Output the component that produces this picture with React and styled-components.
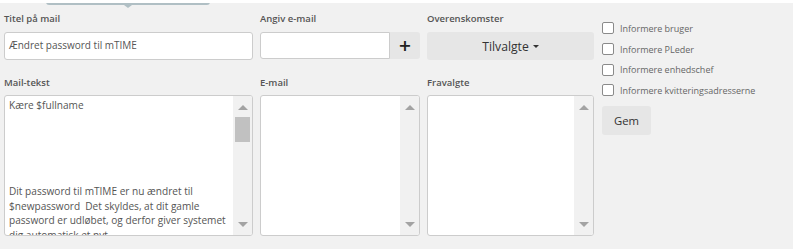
import React from "react";
import styled, { createGlobalStyle } from "styled-components";

const Global = createGlobalStyle`
  html, body { margin: 0; padding: 0; background: #f1f1f1; }
  body { font-family: "Open Sans", "Liberation Sans", sans-serif; }
  * { box-sizing: border-box; }
`;

const Page = styled.div`
  position: relative;
  width: 793px;
  height: 249px;
  background: #f1f1f1;
  border-top: 3px solid #ffffff;
  overflow: hidden;
`;

const Pointer = styled.div`
  position: absolute;
  top: -3px;
  left: 46px;
  width: 164px;
  height: 5px;
  background: #b0bfc4;
  border-radius: 0 0 3px 3px;
  &::after {
    content: "";
    position: absolute;
    left: 78px;
    top: 5px;
    border-left: 4px solid transparent;
    border-right: 4px solid transparent;
    border-top: 3px solid #b0bfc4;
  }
`;

const Layout = styled.div`
  display: flex;
  padding: 8px 0 0 4px;
  gap: 6px;
`;

const FormGrid = styled.div`
  display: grid;
  grid-template-columns: 249px 160px 167px;
  column-gap: 7px;
  align-content: start;
`;

const Field = styled.div`
  display: flex;
  flex-direction: column;
  margin-bottom: ${(p) => p.$mb || 0}px;
`;

const Label = styled.div`
  font-size: 9.5px;
  font-weight: 600;
  color: #555;
  line-height: 15px;
  height: 15px;
  margin-bottom: ${(p) => p.$mb ?? 6}px;
  white-space: nowrap;
`;

const TextInput = styled.div`
  height: 27px;
  background: #fff;
  border: 1px solid #ccc;
  border-radius: ${(p) => (p.$group ? "3px 0 0 3px" : "3px")};
  font-size: 10px;
  color: #555;
  line-height: 25px;
  padding: 0 4px;
  flex: 1;
  white-space: nowrap;
  overflow: hidden;
`;

const Group = styled.div`
  display: flex;
  height: 27px;
`;

const AddonButton = styled.div`
  width: 30px;
  background: #e6e6e6;
  border-radius: 0 3px 3px 0;
  display: flex;
  align-items: center;
  justify-content: center;
  font-size: 16px;
  font-weight: 700;
  color: #222;
  font-family: "DejaVu Sans", sans-serif;
`;

const GrayButton = styled.div`
  height: ${(p) => p.$h || 28}px;
  width: ${(p) => (p.$w ? p.$w + "px" : "auto")};
  background: #e6e6e6;
  border-radius: 3px;
  display: flex;
  align-items: center;
  justify-content: center;
  gap: 4px;
  font-size: ${(p) => p.$fs || 12.2}px;
  color: #333;
`;

const Caret = styled.span`
  display: inline-block;
  border-left: 3px solid transparent;
  border-right: 3px solid transparent;
  border-top: 3px solid #333;
  margin-top: 1px;
`;

const Box = styled.div`
  position: relative;
  height: 141px;
  background: #fff;
  border: 1px solid #ccc;
  border-radius: 3px;
  display: flex;
  overflow: hidden;
`;

const BoxText = styled.div`
  flex: 1;
  padding: 2px 1px 2px 4px;
  font-size: 10.1px;
  line-height: 14.4px;
  color: #555;
  overflow: hidden;
  white-space: pre-wrap;
`;

const Scrollbar = styled.div`
  position: relative;
  width: 19px;
  flex: none;
  background: #f1f1f1;
`;

const Arrow = styled.div`
  position: absolute;
  left: 5px;
  ${(p) => (p.$down ? "bottom: 8px;" : "top: 9px;")}
  border-left: 5px solid transparent;
  border-right: 5px solid transparent;
  ${(p) => (p.$down ? "border-top: 5px solid #a3a3a3;" : "border-bottom: 5px solid #a3a3a3;")}
`;

const Thumb = styled.div`
  position: absolute;
  left: 2px;
  right: 2px;
  top: 21px;
  height: 25px;
  background: #c1c1c1;
`;

const Side = styled.div`
  display: flex;
  flex-direction: column;
  padding-top: 7px;
  padding-left: 2px;
`;

const CheckRow = styled.label`
  display: flex;
  align-items: center;
  gap: 6px;
  height: 20.7px;
  font-size: 9px;
  color: #666;
  white-space: nowrap;
`;

const Check = styled.span`
  width: 12px;
  height: 12px;
  border: 1px solid #8a8a8a;
  border-radius: 2px;
  background: #fff;
  flex: none;
`;

const GemWrap = styled.div`
  margin-top: 5px;
`;

const mailText = `Kære $fullname





Dit password til mTIME er nu ændret til $newpassword  Det skyldes, at dit gamle password er udløbet, og derfor giver systemet dig automatisk et nyt.`;

function Scroll({ thumb }) {
  return (
    <Scrollbar>
      <Arrow />
      {thumb && <Thumb />}
      <Arrow $down />
    </Scrollbar>
  );
}

export default function App() {
  return (
    <>
      <Global />
      <Page>
        <Pointer />
        <Layout>
          <FormGrid>
            <Field $mb={15}>
              <Label>Titel på mail</Label>
              <TextInput>Ændret password til mTIME</TextInput>
            </Field>
            <Field $mb={15}>
              <Label>Angiv e-mail</Label>
              <Group>
                <TextInput $group />
                <AddonButton>+</AddonButton>
              </Group>
            </Field>
            <Field $mb={15}>
              <Label>Overenskomster</Label>
              <GrayButton>
                Tilvalgte <Caret />
              </GrayButton>
            </Field>
            <Field>
              <Label $mb={5}>Mail-tekst</Label>
              <Box>
                <BoxText>{mailText}</BoxText>
                <Scroll thumb />
              </Box>
            </Field>
            <Field>
              <Label $mb={5}>E-mail</Label>
              <Box>
                <BoxText />
                <Scroll />
              </Box>
            </Field>
            <Field>
              <Label $mb={5}>Fravalgte</Label>
              <Box>
                <BoxText />
                <Scroll />
              </Box>
            </Field>
          </FormGrid>
          <Side>
            {["Informere bruger", "Informere PLeder", "Informere enhedschef", "Informere kvitteringsadresserne"].map((t) => (
              <CheckRow key={t}>
                <Check />
                {t}
              </CheckRow>
            ))}
            <GemWrap>
              <GrayButton $w={49} $h={29} $fs={11.3}>Gem</GrayButton>
            </GemWrap>
          </Side>
        </Layout>
      </Page>
    </>
  );
}
